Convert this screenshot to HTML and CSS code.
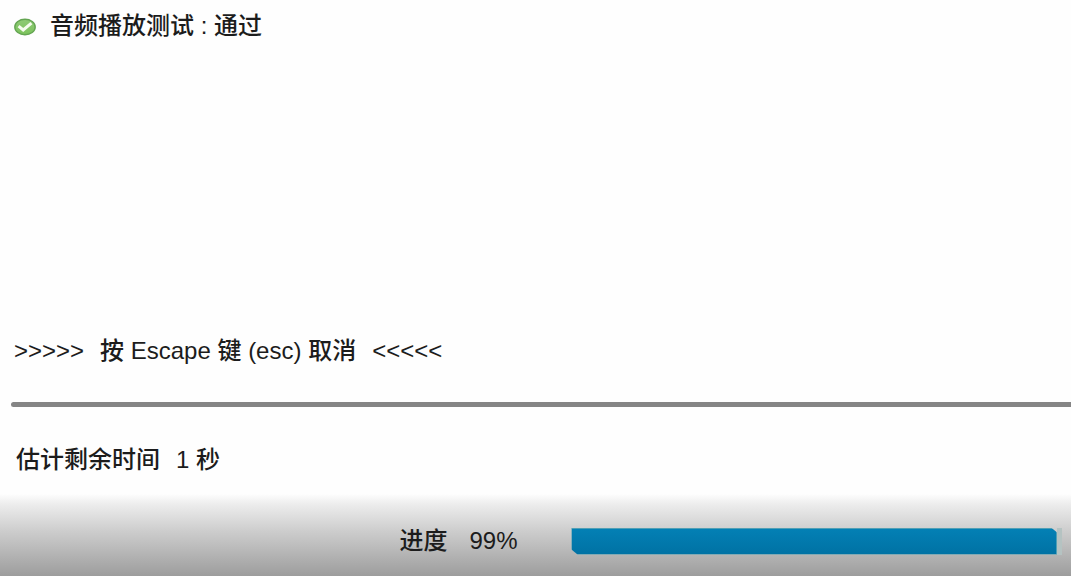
FILE: index.html
```html
<!DOCTYPE html>
<html lang="zh-CN">
<head>
<meta charset="utf-8">
<title>音频播放测试</title>
<link rel="stylesheet" href="styles.css">
</head>
<body>
<main class="screen">
  <section class="result">
    <svg class="check" viewBox="0 0 22 18" aria-hidden="true">
      <defs>
        <linearGradient id="fill" x1="0" y1="0" x2="0" y2="1">
          <stop offset="0" stop-color="#8fca76"/>
          <stop offset="1" stop-color="#7cc35c"/>
        </linearGradient>
      </defs>
      <ellipse cx="11" cy="9" rx="10.2" ry="7.8" fill="url(#fill)" stroke="#64a552" stroke-width="1.4"/>
      <path d="M4.6 8.2 9.2 12 17.4 5.2" fill="none" stroke="#f6fcef" stroke-width="3"/>
    </svg>
    <span>音频播放测试 : 通过</span>
  </section>
  <p class="cancel"><span>&gt;&gt;&gt;&gt;&gt;</span><span>按 Escape 键 (esc) 取消</span><span>&lt;&lt;&lt;&lt;&lt;</span></p>
  <hr class="divider">
  <p class="remaining"><span>估计剩余时间</span><span>1 秒</span></p>
  <footer class="footer">
    <label class="label" for="progress"><span>进度</span><span>99%</span></label>
    <progress class="bar" id="progress" value="99" max="100">99%</progress>
  </footer>
</main>
</body>
</html>
```
FILE: styles.css
```css
body {
  margin: 0;
  background: #fefefe;
  color: #1c1c1c;
  font: 500 24px/32px "Liberation Sans", "Noto Sans CJK SC", sans-serif;
}

.screen {
  display: flex;
  flex-direction: column;
  min-height: 100vh;
}

.result {
  display: flex;
  flex: 1;
  align-items: flex-start;
  gap: 14px;
  padding: 10px 14px;
}

.check {
  width: 22px;
  height: 18px;
  margin-top: 8px;
}

.cancel {
  display: flex;
  gap: 16px;
  margin: 0;
  padding: 0 14px;
}

.divider {
  align-self: stretch;
  height: 5px;
  margin: 35px 0 37px 11px;
  border: 0;
  border-radius: 3px 0 0 3px;
  background: #858585;
}

.remaining {
  display: flex;
  gap: 16px;
  margin: 0;
  padding: 0 16px 18px;
}

.footer {
  display: flex;
  align-items: center;
  box-sizing: border-box;
  height: 82px;
  padding: 12px 9px 0 37.3%;
  background: linear-gradient(#fefefe, #ededed 12%, #cdcdcd 45%, #9d9d9d);
}

.label {
  display: flex;
  flex: none;
  gap: 22px;
  width: 172px;
}

.bar {
  flex: 1;
  min-width: 0;
  height: 27px;
  border: 0;
  background: transparent;
  appearance: none;
}

.bar::-webkit-progress-bar {
  background: linear-gradient(90deg, transparent 99%, #b5c3c2 99%);
}

.bar::-webkit-progress-value {
  border: 1px solid #4f9fb5;
  box-sizing: border-box;
  background: linear-gradient(#0380b5, #0072a4);
  clip-path: polygon(0 0, calc(100% - 6px) 0, 100% 5px, 100% 100%, 6px 100%, 0 calc(100% - 5px));
}
```
